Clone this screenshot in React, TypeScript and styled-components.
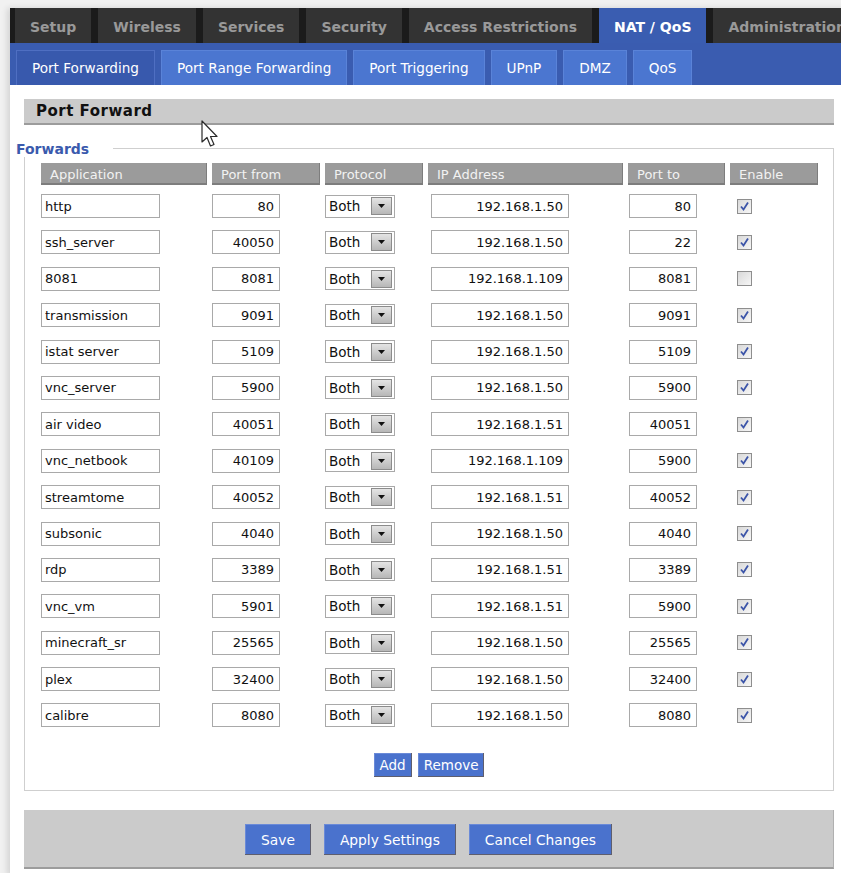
import React from 'react';
import styled, {createGlobalStyle} from 'styled-components';

interface Forward {
    app: string;
    from: string;
    ip: string;
    to: string;
    on: boolean;
}

const forwards: Forward[] = [
    {app: 'http', from: '80', ip: '192.168.1.50', to: '80', on: true},
    {app: 'ssh_server', from: '40050', ip: '192.168.1.50', to: '22', on: true},
    {app: '8081', from: '8081', ip: '192.168.1.109', to: '8081', on: false},
    {app: 'transmission', from: '9091', ip: '192.168.1.50', to: '9091', on: true},
    {app: 'istat server', from: '5109', ip: '192.168.1.50', to: '5109', on: true},
    {app: 'vnc_server', from: '5900', ip: '192.168.1.50', to: '5900', on: true},
    {app: 'air video', from: '40051', ip: '192.168.1.51', to: '40051', on: true},
    {app: 'vnc_netbook', from: '40109', ip: '192.168.1.109', to: '5900', on: true},
    {app: 'streamtome', from: '40052', ip: '192.168.1.51', to: '40052', on: true},
    {app: 'subsonic', from: '4040', ip: '192.168.1.50', to: '4040', on: true},
    {app: 'rdp', from: '3389', ip: '192.168.1.51', to: '3389', on: true},
    {app: 'vnc_vm', from: '5901', ip: '192.168.1.51', to: '5900', on: true},
    {app: 'minecraft_sr', from: '25565', ip: '192.168.1.50', to: '25565', on: true},
    {app: 'plex', from: '32400', ip: '192.168.1.50', to: '32400', on: true},
    {app: 'calibre', from: '8080', ip: '192.168.1.50', to: '8080', on: true},
];

const mainTabs = ['Setup', 'Wireless', 'Services', 'Security', 'Access Restrictions', 'NAT / QoS', 'Administration'];
const subTabs = ['Port Forwarding', 'Port Range Forwarding', 'Port Triggering', 'UPnP', 'DMZ', 'QoS'];
const columns = ['Application', 'Port from', 'Protocol', 'IP Address', 'Port to', 'Enable'];

const GlobalStyle = createGlobalStyle`
    body {
        margin: 0;
        background: #f1f1f1;
        overflow: hidden;
        font-family: "DejaVu Sans", Verdana, sans-serif;
    }
`;

const Shell = styled.div`
    position: relative;
    margin: 8px 0 0 10px;
    width: 860px;
    background: #fff;
    box-shadow: -3px 0 6px rgba(0, 0, 0, 0.12);
`;

const MainNav = styled.nav`
    display: flex;
    gap: 7px;
    height: 35px;
    padding-left: 5px;
    background: #1b1b1b;
`;

const MainTab = styled.div<{$active?: boolean}>`
    display: flex;
    align-items: center;
    padding: 3px 15px 0;
    font-size: 14px;
    font-weight: bold;
    white-space: nowrap;
    color: ${p => (p.$active ? '#fff' : '#999')};
    background: ${p => (p.$active ? '#3a5db1' : '#333')};
`;

const SubNav = styled.nav`
    display: flex;
    align-items: flex-end;
    gap: 6px;
    height: 42px;
    padding-left: 6px;
    background: #3a5cb0;
    width: 831px;
`;

const SubTab = styled.div<{$active?: boolean}>`
    display: flex;
    align-items: center;
    height: 34px;
    padding: 0 15px;
    font-size: 13.6px;
    white-space: nowrap;
    color: #fff;
    background: ${p => (p.$active ? '#3859ad' : '#4b76d0')};
    border: 1px solid ${p => (p.$active ? '#4f6fc2' : '#5a83d8')};
    border-bottom: none;
`;

const Content = styled.main`
    width: 810px;
    padding: 14px 7px 7px 14px;
`;

const SectionBar = styled.h2`
    margin: 0;
    height: 24px;
    padding-left: 12px;
    display: flex;
    align-items: center;
    font-size: 15px;
    letter-spacing: 0.5px;
    color: #111;
    background: #cbcbcb;
    border-bottom: 2px solid #9c9c9c;
`;

const Group = styled.section`
    margin-top: 16px;
`;

const GroupHead = styled.div`
    display: flex;
    height: 16px;
    margin-left: -8px;
`;

const Legend = styled.span`
    font-size: 14px;
    font-weight: bold;
    line-height: 16px;
    color: #3a5aad;
    padding-right: 24px;
`;

const HeadRule = styled.span`
    flex: 1;
    margin-top: 7px;
    border-top: 1px solid #cfcfcf;
    border-right: 1px solid #cfcfcf;
`;

const GroupBody = styled.div`
    border: 1px solid #cfcfcf;
    border-top: none;
    padding: 6px 0 13px 16px;
`;

const Grid = styled.div`
    display: grid;
    grid-template-columns: 166px 108px 98px 195px 97px 88px;
    column-gap: 5px;
`;

const HeaderGrid = styled(Grid)`
    margin-bottom: 9px;
`;

const RowsGrid = styled(Grid)`
    row-gap: 12.4px;
    align-items: center;
`;

const HeadCell = styled.div`
    height: 22px;
    display: flex;
    align-items: center;
    padding-left: 9px;
    font-size: 13px;
    color: #f2f2f2;
    background: #9b9b9b;
    box-shadow: inset -1px -2px 0 #7d7d7d;
`;

const Cell = styled.div<{$offset?: number}>`
    height: 24px;
    display: flex;
    align-items: center;
    padding-left: ${p => p.$offset ?? 0}px;
`;

const Field = styled.input<{$width: number; $right?: boolean}>`
    box-sizing: border-box;
    width: ${p => p.$width}px;
    height: 24px;
    margin: 0;
    padding: 0 ${p => (p.$right ? 5 : 3)}px;
    border: 1px solid #a9a9a9;
    outline: none;
    font-family: "DejaVu Sans", Verdana, sans-serif;
    font-size: 13px;
    color: #111;
    background: #fff;
    text-align: ${p => (p.$right ? 'right' : 'left')};
`;

const Select = styled.div`
    box-sizing: border-box;
    width: 70px;
    height: 23px;
    display: flex;
    align-items: center;
    justify-content: space-between;
    padding: 0 2px 0 3px;
    border: 1px solid #a9a9a9;
    font-size: 13.5px;
    color: #111;
`;

const SelectButton = styled.span`
    box-sizing: border-box;
    width: 21px;
    height: 18px;
    display: flex;
    align-items: center;
    justify-content: center;
    border: 1px solid #8c8c8c;
    background: linear-gradient(#e4e4e4, #b7b7b7);
`;

const Check = styled.span`
    box-sizing: border-box;
    width: 15px;
    height: 15px;
    display: flex;
    align-items: center;
    justify-content: center;
    border: 1px solid #8e8e8e;
    background: linear-gradient(135deg, #d9d9d9, #f6f6f6);
`;

const ButtonRow = styled.div<{$gap: number}>`
    display: flex;
    justify-content: center;
    gap: ${p => p.$gap}px;
`;

const AddRow = styled(ButtonRow)`
    margin-top: 26px;
    padding-right: 16px;
`;

const Button = styled.button<{$big?: boolean}>`
    height: ${p => (p.$big ? 31 : 24)}px;
    padding: 0 ${p => (p.$big ? 16 : 6)}px;
    font-family: "DejaVu Sans", Verdana, sans-serif;
    font-size: ${p => (p.$big ? 13.8 : 13.5)}px;
    color: #fff;
    background: #4a72cd;
    border: none;
    box-shadow: inset -1px -1px 0 #5e5e6e, inset 1px 1px 0 #6a8ad8;
    cursor: pointer;
`;

const ActionBar = styled.footer`
    margin-top: 19px;
    padding: 14px 0 12px;
    background: #cbcbcb;
    border-bottom: 2px solid #9c9c9c;
    border-right: 1px solid #b0b0b0;
`;

const Pointer = styled.svg`
    position: absolute;
    left: 191px;
    top: 112px;
    pointer-events: none;
`;

const Checkmark = () => (
    <svg width="11" height="11" viewBox="0 0 11 11">
        <path d="M2 5.5 L4.5 8.5 L9 1.5" fill="none" stroke="#3b54a8" strokeWidth="1.8" />
    </svg>
);

const App: React.FC = () => {
    return (
        <>
            <GlobalStyle />
            <Shell>
                <MainNav>
                    {mainTabs.map(t => (
                        <MainTab key={t} $active={t === 'NAT / QoS'}>
                            {t}
                        </MainTab>
                    ))}
                </MainNav>
                <SubNav>
                    {subTabs.map(t => (
                        <SubTab key={t} $active={t === 'Port Forwarding'}>
                            {t}
                        </SubTab>
                    ))}
                </SubNav>
                <Content>
                    <SectionBar>Port Forward</SectionBar>
                    <Group>
                        <GroupHead>
                            <Legend>Forwards</Legend>
                            <HeadRule />
                        </GroupHead>
                        <GroupBody>
                            <HeaderGrid>
                                {columns.map(c => (
                                    <HeadCell key={c}>{c}</HeadCell>
                                ))}
                            </HeaderGrid>
                            <RowsGrid>
                                {forwards.map((f, i) => (
                                    <React.Fragment key={i}>
                                        <Cell>
                                            <Field $width={119} defaultValue={f.app} readOnly />
                                        </Cell>
                                        <Cell>
                                            <Field $width={68} $right defaultValue={f.from} readOnly />
                                        </Cell>
                                        <Cell>
                                            <Select>
                                                Both
                                                <SelectButton>
                                                    <svg width="7" height="4" viewBox="0 0 7 4">
                                                        <path d="M0 0 H7 L3.5 4 Z" fill="#111" />
                                                    </svg>
                                                </SelectButton>
                                            </Select>
                                        </Cell>
                                        <Cell $offset={3}>
                                            <Field $width={138} $right defaultValue={f.ip} readOnly />
                                        </Cell>
                                        <Cell $offset={1}>
                                            <Field $width={68} $right defaultValue={f.to} readOnly />
                                        </Cell>
                                        <Cell $offset={7}>
                                            <Check>{f.on && <Checkmark />}</Check>
                                        </Cell>
                                    </React.Fragment>
                                ))}
                            </RowsGrid>
                            <AddRow $gap={6}>
                                <Button>Add</Button>
                                <Button>Remove</Button>
                            </AddRow>
                        </GroupBody>
                    </Group>
                    <ActionBar>
                        <ButtonRow $gap={13}>
                            <Button $big>Save</Button>
                            <Button $big>Apply Settings</Button>
                            <Button $big>Cancel Changes</Button>
                        </ButtonRow>
                    </ActionBar>
                </Content>
                <Pointer width="18" height="28" viewBox="0 0 18 28">
                    <path
                        d="M1 1 L1 22 L6 17.5 L9.5 26 L13 24.5 L9.5 16.5 L16 16.5 Z"
                        fill="#fff"
                        stroke="#2a2a2a"
                        strokeWidth="1.2"
                        strokeLinejoin="round"
                    />
                </Pointer>
            </Shell>
        </>
    );
};

export default App;
